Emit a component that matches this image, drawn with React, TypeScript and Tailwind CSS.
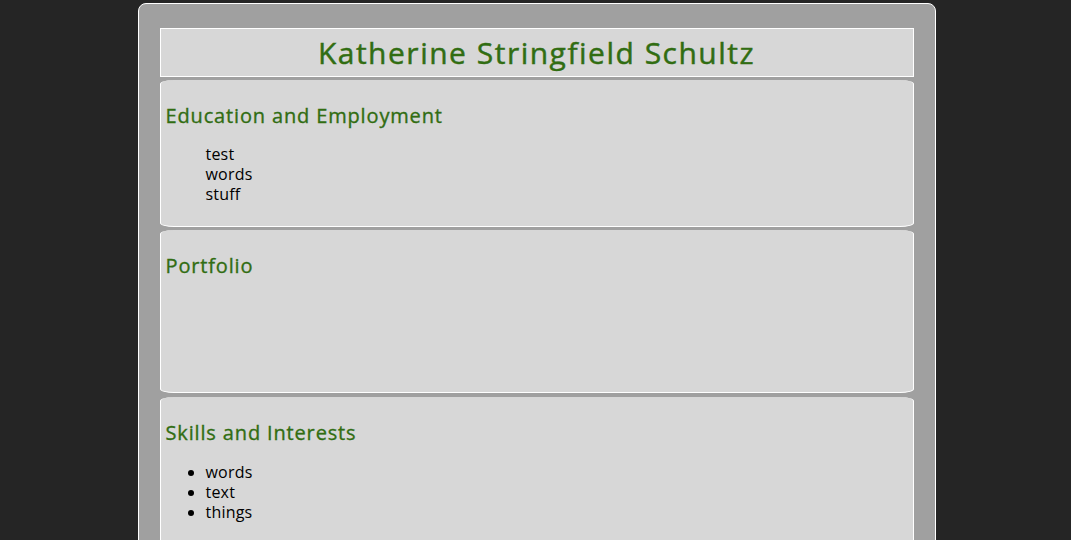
import React from "react";

const heading =
  "text-[20px] leading-6 tracking-[0.85px] text-[#316d12] [-webkit-text-stroke:0.35px_#316d12] font-['Open_Sans',sans-serif]";

function Section({ title, children, className = "" }: { title: string; children?: React.ReactNode; className?: string }) {
  return (
    <section
      className={`bg-[#d7d7d7] border-x border-b border-white rounded-[14px/4px] px-[5px] pt-[24px] pb-[22px] ${className}`}
    >
      <h2 className={heading}>{title}</h2>
      {children}
    </section>
  );
}

export default function App() {
  return (
    <div className="min-h-screen bg-[#252525] font-['Open_Sans',sans-serif]">
      <div className="mx-auto w-[798px] pt-[3px] translate-x-[1px]">
        <div className="bg-[#a0a0a0] border border-white rounded-[8px] pl-[21px] pr-[21px] pt-[24px] min-h-[560px] flex flex-col gap-[3px]">
          <header className="bg-[#d7d7d7] border border-white h-[49px] flex items-center justify-center">
            <h1 className="text-[30px] leading-9 tracking-[1.5px] text-[#316d12] [-webkit-text-stroke:0.45px_#316d12]">
              Katherine Stringfield Schultz
            </h1>
          </header>

          <Section title="Education and Employment">
            <ul className="mt-[16px] pl-[40px] text-[16px] leading-5 tracking-[0.2px] text-black">
              <li>test</li>
              <li>words</li>
              <li>stuff</li>
            </ul>
          </Section>

          <Section title="Portfolio" className="h-[163px]" />

          <Section title="Skills and Interests" className="mt-[1px]">
            <ul className="mt-[17px] pl-[40px] list-disc text-[16px] leading-5 tracking-[0.2px] text-black">
              <li>words</li>
              <li>text</li>
              <li>things</li>
            </ul>
          </Section>
        </div>
      </div>
    </div>
  );
}
